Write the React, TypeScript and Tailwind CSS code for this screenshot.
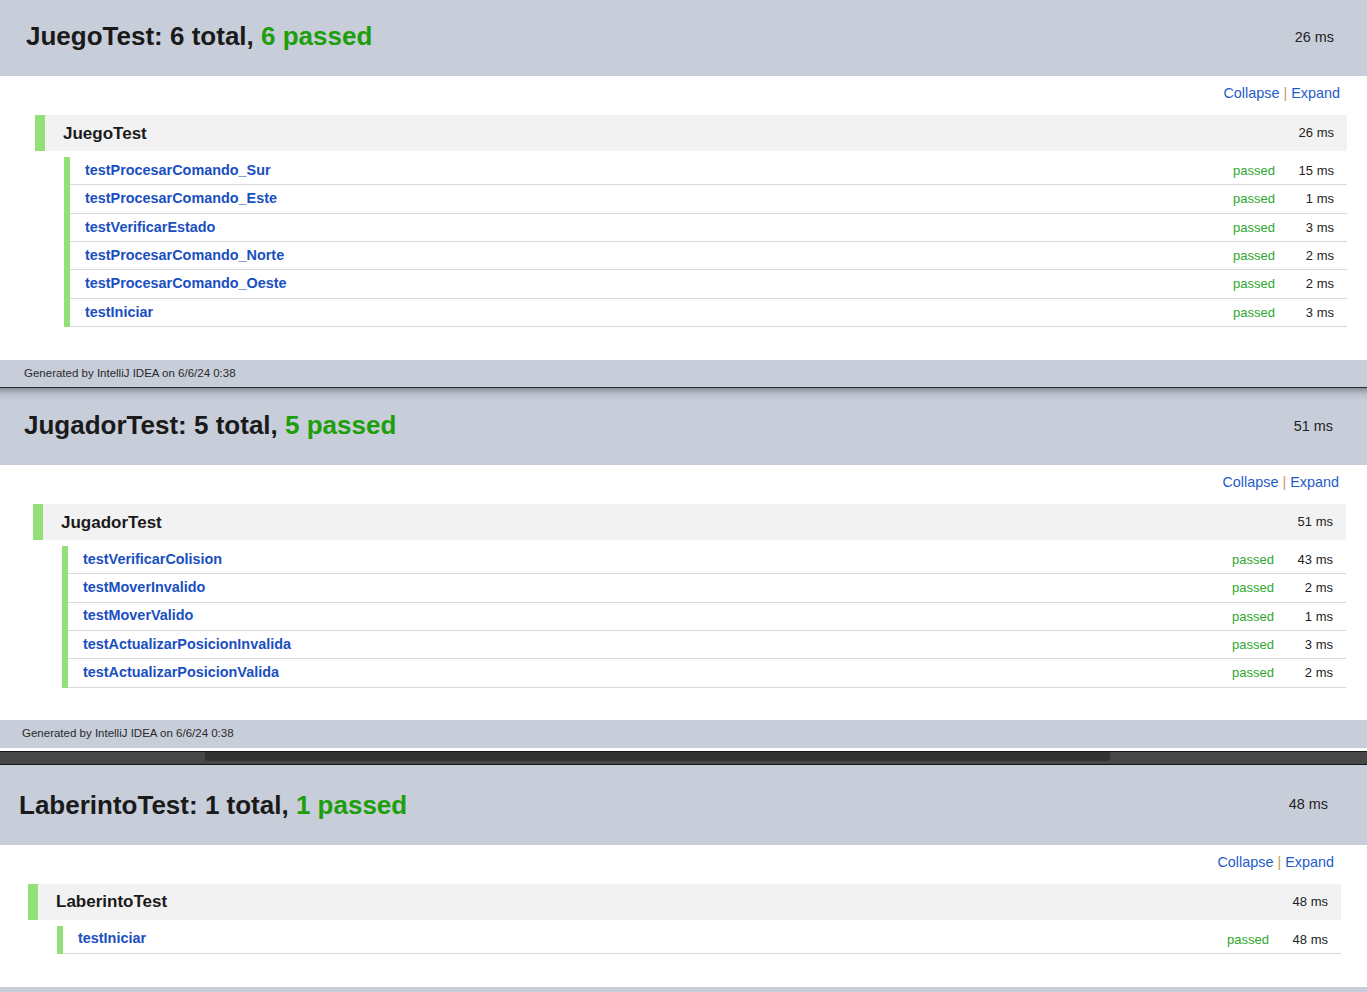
import React from 'react'

type TestCase = { name: string; time: string }

type SectionProps = {
  suite: string
  time: string
  tests: TestCase[]
  shift: string
  headerClass: string
  titleClass: string
  bodyClass: string
  footerClass: string
  footerText?: boolean
}

const FONT = "font-['Liberation_Sans',Arial,sans-serif]"

function Section({
  suite,
  time,
  tests,
  shift,
  headerClass,
  titleClass,
  bodyClass,
  footerClass,
  footerText = true,
}: SectionProps) {
  return (
    <div>
      <div className={headerClass}>
        <div className={`flex h-full items-center justify-between pl-[26px] pr-[33px] ${shift}`}>
          <h1 className={`text-[26px] font-bold text-[#1a1a1a] ${titleClass}`}>
            {suite}: {tests.length} total, <span className="text-[#1d9f0c]">{tests.length} passed</span>
          </h1>
          <span className="text-[14.4px] text-[#222]">{time}</span>
        </div>
      </div>

      <div className={`bg-white ${bodyClass}`}>
        <div className={shift}>
          <div className="flex justify-end pr-[27px] text-[14.4px] leading-[17px] text-[#1f5bc9]">
            <span>Collapse</span>
            <span className="px-[4px] text-[#c49a62]">|</span>
            <span>Expand</span>
          </div>

          <div className="ml-[35px] mr-[20px] mt-[13px]">
            <div className="flex h-[36px] items-center border-l-[10px] border-[#93df78] bg-[#f2f2f2] pl-[18px] pr-[13px]">
              <span className="flex-1 pt-px text-[17px] font-bold text-[#1a1a1a]">{suite}</span>
              <span className="text-[13px] text-[#222]">{time}</span>
            </div>

            <div className="ml-[29px] mt-[6px] border-l-[6px] border-[#93df78]">
              {tests.map((t) => (
                <div
                  key={t.name}
                  className="flex h-[28.33px] items-center border-b border-[#d9d9d9] pl-[15px] pr-[13px]"
                >
                  <span className="flex-1 text-[14.4px] font-bold text-[#1a4fbf]">{t.name}</span>
                  <span className="text-[13px] text-[#2ea82e]">passed</span>
                  <span className="ml-[14px] w-[45px] text-right text-[13px] text-[#222]">{t.time}</span>
                </div>
              ))}
            </div>
          </div>
        </div>
      </div>

      <div className={`bg-[#c7cdd9] ${footerClass}`}>
        {footerText && (
          <div className={`flex h-full items-center pl-[24px] text-[11.5px] text-[#2a2a2a] ${shift}`}>
            Generated by IntelliJ IDEA on 6/6/24 0:38
          </div>
        )}
      </div>
    </div>
  )
}

export default function App() {
  return (
    <div className={`h-[992px] w-full overflow-hidden bg-white ${FONT}`}>
      <Section
        suite="JuegoTest"
        time="26 ms"
        shift=""
        headerClass="h-[76px] bg-[#c7cdd9]"
        titleClass="mb-[4px]"
        bodyClass="pt-[9px] pb-[33px]"
        footerClass="h-[27px]"
        tests={[
          { name: 'testProcesarComando_Sur', time: '15 ms' },
          { name: 'testProcesarComando_Este', time: '1 ms' },
          { name: 'testVerificarEstado', time: '3 ms' },
          { name: 'testProcesarComando_Norte', time: '2 ms' },
          { name: 'testProcesarComando_Oeste', time: '2 ms' },
          { name: 'testIniciar', time: '3 ms' },
        ]}
      />
      <div className="h-px bg-[#2b2b2b]" />

      <Section
        suite="JugadorTest"
        time="51 ms"
        shift="-ml-[2px] mr-[1px]"
        headerClass="h-[77px] bg-[linear-gradient(to_bottom,#8a8f99,#b9bfcb_6px,#c7cdd9_12px)]"
        titleClass="mb-[2px]"
        bodyClass="pt-[9px] pb-[32px]"
        footerClass="h-[28px]"
        tests={[
          { name: 'testVerificarColision', time: '43 ms' },
          { name: 'testMoverInvalido', time: '2 ms' },
          { name: 'testMoverValido', time: '1 ms' },
          { name: 'testActualizarPosicionInvalida', time: '3 ms' },
          { name: 'testActualizarPosicionValida', time: '2 ms' },
        ]}
      />
      <div className="h-[3px] bg-white" />
      <div className="border-y border-[#161616] bg-[#474747]">
        <div className="h-[12px] pl-[205px] pr-[257px]">
          <div className="h-[9px] rounded-b-[3px] bg-[#323232]" />
        </div>
      </div>

      <Section
        suite="LaberintoTest"
        time="48 ms"
        shift="-ml-[7px] mr-[6px]"
        headerClass="h-[80px] bg-[#c7cdd9]"
        titleClass="mt-[2px]"
        bodyClass="pt-[9px] pb-[33px]"
        footerClass="h-[27px]"
        footerText={false}
        tests={[{ name: 'testIniciar', time: '48 ms' }]}
      />
    </div>
  )
}
